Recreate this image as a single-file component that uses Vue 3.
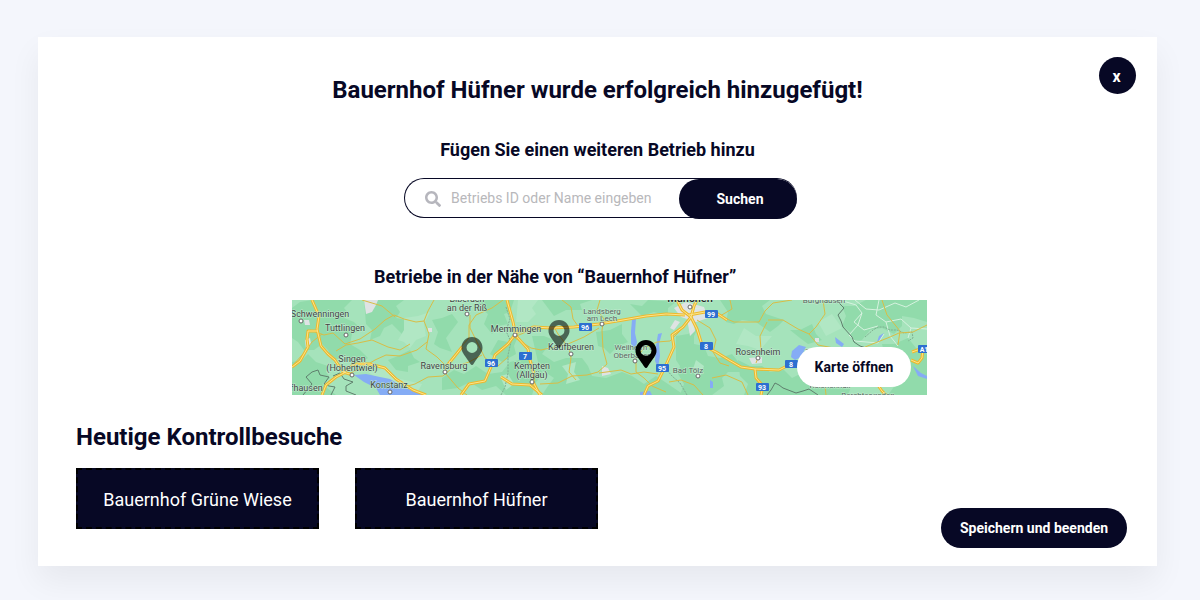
<script setup>
import { ref } from 'vue'

const query = ref('')
const visits = ['Bauernhof Grüne Wiese', 'Bauernhof Hüfner']

const pins = [
  { x: 180, y: 37, muted: true },
  { x: 267, y: 20, muted: true },
  { x: 354, y: 40, muted: false },
]

const patches = [
  'M0 8 8 2 20 0 60 0 52 8 57 14 52 18 62 22 70 30 60 34 58 44 68 50 76 58 64 66 52 58 40 60 36 50 30 44 22 50 12 50 6 42 0 38Z',
  'M72 0 112 0 104 6 108 12 104 18 116 20 124 26 110 34 100 24 92 28 88 36 78 40 80 30 74 24Z',
  'M0 62 10 60 16 54 24 62 36 66 34 72 38 78 30 84 44 95 0 95Z',
  'M96 60 106 56 118 50 122 58 128 62 116 66 116 72 104 70Z',
  'M140 20 150 18 160 14 166 22 160 30 154 38 160 52 148 48 142 44 146 32Z',
  'M186 0 222 0 218 12 212 14 216 24 206 26 200 34 192 24 196 14 188 8Z',
  'M150 78 162 70 172 74 184 66 196 74 210 72 218 62 236 58 246 66 252 74 244 82 240 95 214 95 204 86 190 90 178 82 166 88 150 90Z',
  'M206 40 216 42 226 36 222 46 224 54 210 62 204 58 198 54Z',
  'M250 0 300 0 288 4 290 10 274 10 262 16Z',
  'M240 36 252 36 262 40 256 46 250 54 262 62 274 58 290 58 296 66 300 76 314 78 330 72 340 76 352 84 364 76 376 84 392 95 250 95 256 86 262 78 250 70 246 62Z',
  'M304 32 318 30 330 24 330 34 336 42 326 46 318 54 312 48 306 46Z',
  'M338 4 350 6 356 0 384 2 376 8 376 16 362 12 350 16Z',
  'M384 36 396 34 406 28 402 36 402 44 412 46 416 56 428 58 440 54 448 64 448 72 436 72 430 78 432 86 420 95 388 95 392 84 386 74 388 66 384 60Z',
  'M428 0 478 0 470 6 474 14 492 20 486 26 478 32 464 22 450 20 442 24 434 22 436 12Z',
  'M446 60 458 66 470 66 478 72 492 70 500 78 524 66 540 76 560 84 556 95 452 95 456 84 448 76Z',
  'M498 30 508 30 520 24 524 34 530 40 516 44 508 38Z',
  'M550 6 562 6 574 0 635 0 635 22 622 18 610 16 610 26 602 34 590 28 578 30 570 40 562 42 558 32 550 26 554 16Z',
  'M590 44 602 44 616 38 624 48 635 54 635 95 596 95 604 84 598 76Z',
]
const paleAreas = [
  'M112 18 126 16 138 12 132 24 134 36 124 40 118 48 112 42 106 40 112 30Z',
  'M76 72 84 72 94 66 104 78 130 84 124 95 96 88 88 80Z',
  'M226 0 246 0 240 8 244 14 236 22 224 22Z',
  'M270 66 284 62 282 72 288 80 274 84 276 74Z',
  'M452 28 464 36 480 36 468 50 456 46 444 44Z',
  'M540 14 550 28 534 36 526 22Z',
  'M208 76 216 74 222 84 214 90Z',
  'M404 60 412 66 408 78 400 72Z',
]
const lakes = [
  'M62 75 74 74 88 77 98 79 111 87 132 95 88 95 84 88 72 82Z',
  'M340 20 344 18 343 33 345 42 343 51 339 44 339 31Z',
  'M366 34 370 33 367 44 368 56 366 67 363 61 364 46Z',
  'M500 51 507 45 514 47 509 57 503 60 499 57Z',
  'M543 37 552 44 550 47 544 43Z',
  'M587 36 592 33 588 40 585 42Z',
  'M418 80 421 82 421 88 418 88Z',
  'M348 92 358 91 360 95 348 95Z',
  'M621 66 629 73 635 76 635 79 626 76Z',
]
const urban = [
  'M72 0 86 0 84 5 80 12 74 14Z',
  'M382 8 394 2 412 7 416 18 404 22 389 17Z',
  'M395 18 401 17 403 31 398 36Z',
  'M383 20 388 22 382 30 378 28Z',
  'M13 40 18 38 19 44 14 48Z',
  'M12 20 17 20 18 25 13 25Z',
  'M310 66 316 68 319 74 310 76Z',
  'M457 58 470 57 470 63 460 64Z',
  'M91 95 103 88 107 95Z',
  'M136 28 140 28 140 32 136 32Z',
  'M523 38 527 38 527 42 523 42Z',
]
const minorRoads = [
  'M18 30 32 35 41 33 53 44 68 39 83 29 93 20 102 15 112 19 124 22 132 21 136 11 142 0',
  'M132 21 137 34 134 49 145 57 153 65',
  'M30 34 20 42 12 53 0 66',
  'M44 51 54 45 66 43 80 40 96 47 108 50 118 44',
  'M56 74 70 68 83 60 94 55 108 56 125 50 135 42',
  'M154 65 162 57 168 48 177 38 177 25 184 15 200 8 211 0',
  'M178 15 178 28 186 44 193 58 206 66 216 57',
  'M112 87 123 84 136 77 151 76 160 68 177 62 190 55',
  'M70 0 90 6 103 17',
  'M153 65 154 74 166 88 175 95',
  'M222 37 234 32 248 29 262 27 266 34 277 48 279 58 277 72 284 80',
  'M223 38 239 48 249 50 262 47 276 44 292 37 307 28',
  'M270 0 279 7 281 19 286 26',
  'M308 0 305 10 312 19 310 30 311 49 315 64 306 72 295 75 280 76 266 83 248 84',
  'M344 60 344 72 352 78 360 86 374 92',
  'M307 73 329 70 339 74 352 72 366 74',
  'M343 60 352 48 365 42 378 41 390 29',
  'M405 20 418 28 424 40 421 52 428 63 437 66',
  'M377 82 389 80 402 85 411 95',
  'M438 0 440 9 428 16 442 22 467 22 473 11 481 3 500 0',
  'M475 22 468 36 469 50 464 63',
  'M476 20 491 20 506 29 517 34 524 27 533 14 531 0',
  'M517 34 526 45 542 48 561 52 578 45 598 37 607 33 621 32 635 25',
  'M590 0 595 15 608 31 606 45',
  'M456 95 450 82 434 75 420 78',
  'M520 64 532 76 534 95',
]
const majorRoads = [
  'M20 0 27 16 25 29 29 46 36 54 43 60 51 72 61 75',
  'M25 31 16 31 15 39 16 47 8 61 0 67',
  'M51 72 63 64 78 64 93 68 104 79 121 90 134 95',
  'M30 95 34 85 44 77 54 72',
  'M153 68 162 57 170 47',
  'M169 95 177 84 193 81 199 67 203 55 216 44 225 32',
  'M225 32 242 27 259 28 282 27 307 24 331 20 354 16 374 14 393 15',
  'M215 0 221 22 224 36 236 49 238 60 242 74 241 82 248 95',
  'M209 77 220 84 238 85 250 95',
  'M399 17 391 27 380 35 382 47 373 67 366 81 356 86 352 95',
  'M399 17 402 6 405 0',
  'M399 17 405 29 410 45 424 52 437 60 449 67 463 69 487 70 501 63',
  'M397 15 413 12 426 14 435 20',
  'M385 0 390 10 399 17',
  'M463 69 464 78 471 86 469 95',
  'M583 81 590 91 594 95',
  'M620 52 631 48 630 58 626 63 619 60',
]
const borders = [
  'M11 95 20 84 14 77 20 72 26 70 28 75 37 77 32 84 37 86 43 87 39 95',
  'M41 76 48 73 52 79 61 82 54 86 54 91 64 95',
  'M545 0 548 4 552 8 546 15 549 21 551 27 560 37 562 42 568 46 574 48',
  'M475 95 479 90 483 83 487 85 491 88 504 93 511 91 517 89 526 95',
]
const districtLines = [
  'M214 7 218 19 214 31 219 42 216 55 216 73 213 87 209 95',
  'M395 95 388 83 380 76 375 70',
  'M573 37 581 30 586 27 592 27 598 30 605 30 612 33 620 32 621 38 616 41',
]
const whiteRoads = [
  'M548 0 564 5 570 13 566 25 557 35 563 41 586 43 592 34',
  'M563 0 574 9 587 10 603 3 614 7 627 0',
  'M570 13 562 22 572 30 586 26',
  'M587 0 584 15 594 22 609 19 619 28 635 29',
  'M594 22 598 36 606 46 M619 28 616 38',
  'M396 4 401 12 411 16 M390 15 399 9 411 8 M397 18 401 31',
]
const towns = [
  [9, 21], [54, 35], [60, 75], [98, 92], [153, 72], [175, 14],
  [223, 35], [279, 54], [310, 24], [343, 61], [240, 82], [398, 7],
  [406, 76], [466, 58],
]
const labels = [
  { t: 'Schwenningen', x: 28, y: 17 },
  { t: 'Tuttlingen', x: 53, y: 31 },
  { t: 'Singen', x: 60, y: 62 },
  { t: '(Hohentwiel)', x: 60, y: 71 },
  { t: 'Schaffhausen', x: 3, y: 91 },
  { t: 'Konstanz', x: 97, y: 88 },
  { t: 'Ravensburg', x: 152, y: 69 },
  { t: 'Biberach', x: 175, y: 2 },
  { t: 'an der Riß', x: 175, y: 11 },
  { t: 'Memmingen', x: 224, y: 32 },
  { t: 'Kempten', x: 240, y: 69 },
  { t: '(Allgäu)', x: 240, y: 78 },
  { t: 'Kaufbeuren', x: 279, y: 50 },
  { t: 'Landsberg', x: 310, y: 14, small: true },
  { t: 'am Lech', x: 310, y: 21, small: true },
  { t: 'Weilheim in', x: 343, y: 50, small: true },
  { t: 'Oberbayern', x: 342, y: 58, small: true },
  { t: 'Bad Tölz', x: 396, y: 73, small: true },
  { t: 'München', x: 398, y: 2, city: true },
  { t: 'Burghausen', x: 532, y: 3, small: true },
  { t: 'Rosenheim', x: 466, y: 55 },
  { t: 'Traunstein', x: 532, y: 54, small: true },
  { t: 'Reichenhall', x: 538, y: 88, small: true },
  { t: 'Berchtesgaden', x: 576, y: 98, small: true },
]
const shields = [
  { t: '96', x: 199, y: 63 },
  { t: '96', x: 293, y: 27 },
  { t: '7', x: 233, y: 56 },
  { t: '95', x: 370, y: 68 },
  { t: '99', x: 419, y: 14 },
  { t: '8', x: 414, y: 46 },
  { t: '8', x: 499, y: 64 },
  { t: '93', x: 470, y: 87 },
  { t: 'A1', x: 632, y: 49 },
]
</script>

<template>
  <main class="page">
    <section class="card">
      <button class="close" type="button" aria-label="Schließen">x</button>

      <h1 class="title">Bauernhof Hüfner wurde erfolgreich hinzugefügt!</h1>

      <form class="search" @submit.prevent>
        <label class="subtitle" for="betrieb">Fügen Sie einen weiteren Betrieb hinzu</label>
        <div class="search-bar">
          <svg class="search-icon" viewBox="0 0 512 512" aria-hidden="true">
            <path d="M505 442.700 405.300 343c-4.500-4.500-10.600-7-17-7H372c27.600-35.300 44-79.700 44-128C416 93.100 322.900 0 208 0S0 93.100 0 208s93.100 208 208 208c48.300 0 92.700-16.400 128-44v16.300c0 6.400 2.500 12.500 7 17l99.700 99.700c9.400 9.400 24.600 9.400 33.900 0l28.300-28.300c9.400-9.400 9.400-24.600.1-34zM208 336c-70.700 0-128-57.200-128-128 0-70.700 57.200-128 128-128 70.700 0 128 57.200 128 128 0 70.700-57.200 128-128 128z" />
          </svg>
          <input id="betrieb" v-model="query" class="search-input" type="text" placeholder="Betriebs ID oder Name eingeben" />
          <button class="pill search-button" type="submit">Suchen</button>
        </div>
      </form>

      <section class="nearby">
        <h2 class="subtitle nearby-title">Betriebe in der Nähe von “Bauernhof Hüfner”</h2>
        <div class="map">
          <svg class="map-canvas" viewBox="0 0 635 95" preserveAspectRatio="xMidYMid slice" role="img" aria-label="Karte">
            <rect class="land" width="635" height="95" />
            <path v-for="d in patches" :key="d" class="forest" :d="d" />
            <path v-for="d in paleAreas" :key="d" class="meadow" :d="d" />
            <path v-for="d in urban" :key="d" class="urban" :d="d" />
            <path v-for="d in lakes" :key="d" class="lake" :d="d" />
            <path v-for="d in whiteRoads" :key="d" class="road-white" :d="d" />
            <path v-for="d in districtLines" :key="d" class="district" :d="d" />
            <path v-for="d in borders" :key="d" class="border" :d="d" />
            <path v-for="d in minorRoads" :key="d" class="road-minor" :d="d" />
            <path v-for="d in majorRoads" :key="d" class="road-casing" :d="d" />
            <path v-for="d in majorRoads" :key="d" class="road-major" :d="d" />
            <circle v-for="([x, y], i) in towns" :key="i" class="town" :cx="x" :cy="y" r="2" />
            <text
              v-for="l in labels"
              :key="l.t"
              class="label"
              :class="{ small: l.small, city: l.city }"
              :x="l.x"
              :y="l.y"
            >{{ l.t }}</text>
            <g v-for="(s, i) in shields" :key="i">
              <rect class="shield" :x="s.x - 6" :y="s.y - 4" width="13" height="8" rx="1" />
              <text class="shield-text" :x="s.x" :y="s.y + 3">{{ s.t }}</text>
            </g>
            <svg
              v-for="p in pins"
              :key="p.x"
              class="pin"
              :class="{ muted: p.muted }"
              :x="p.x - 11"
              :y="p.y"
              width="22"
              height="28"
              viewBox="0 0 384 512"
            >
              <path fill-rule="evenodd" d="M172 502C27 291 0 269 0 192 0 86 86 0 192 0s192 86 192 192c0 77-27 99-172 310-10 14-30 14-40 0zM192 292a100 100 0 1 0 0-200 100 100 0 0 0 0 200z" />
            </svg>
          </svg>
          <button class="pill map-button" type="button">Karte öffnen</button>
        </div>
      </section>

      <section class="visits">
        <h2 class="visits-title">Heutige Kontrollbesuche</h2>
        <div class="visit-list">
          <button v-for="v in visits" :key="v" class="visit" type="button">{{ v }}</button>
        </div>
      </section>

      <footer class="actions">
        <button class="pill save" type="button">Speichern und beenden</button>
      </footer>
    </section>
  </main>
</template>

<style>
body {
  margin: 0;
  background: #f4f6fc;
}
</style>

<style scoped>
.page {
  padding: 37px 43px 34px 38px;
  color: #070825;
  font-family: Roboto, "Liberation Sans", sans-serif;
}
.card {
  position: relative;
  padding: 37px 30px 18px 38px;
  background: #fff;
  box-shadow: 0 15px 30px rgba(0, 0, 0, 0.06);
}
button,
input {
  font-family: inherit;
  border: 0;
  padding: 0;
}
button {
  cursor: pointer;
}
.close {
  position: absolute;
  top: 20px;
  right: 21px;
  width: 37px;
  height: 37px;
  padding: 2px 2px 0 0;
  border-radius: 50%;
  background: #070825;
  color: #fff;
  font-size: 16px;
  font-weight: 700;
}
h1,
h2 {
  margin: 0;
}
.title {
  padding-right: 8px;
  font-size: 24px;
  line-height: 32px;
  font-weight: 700;
  text-align: center;
}
.subtitle {
  font-size: 18px;
  line-height: 24px;
  font-weight: 700;
}
.search {
  display: flex;
  flex-direction: column;
  align-items: center;
  gap: 16px;
  margin-top: 32px;
  padding-right: 8px;
}
.search-bar {
  box-sizing: border-box;
  display: flex;
  align-items: flex-start;
  width: 393px;
  max-width: 100%;
  height: 40px;
  margin-left: 6px;
  padding-left: 20px;
  border: 1px solid #070825;
  border-right: 0;
  border-radius: 20px;
}
.search-icon {
  flex: none;
  width: 16px;
  height: 16px;
  margin-top: 12px;
  fill: #b6b6bd;
}
.search-input {
  flex: 1;
  min-width: 0;
  height: 38px;
  margin-left: 10px;
  background: none;
  outline: 0;
  color: #070825;
  font-size: 14px;
}
.search-input::placeholder {
  color: #b8b8bb;
  opacity: 1;
}
.pill {
  height: 40px;
  border-radius: 20px;
  background: #070825;
  color: #fff;
  font-size: 14px;
  font-weight: 700;
}
.search-button {
  flex: none;
  width: 118px;
  padding-left: 4px;
}
.nearby {
  width: 635px;
  max-width: 100%;
  margin: 47px auto 0;
  padding-left: 16px;
}
.nearby-title {
  padding-left: 82px;
}
.map {
  position: relative;
  height: 95px;
  margin-top: 11px;
  overflow: hidden;
}
.map-canvas {
  display: block;
  width: 100%;
  height: 100%;
}
.map-button {
  position: absolute;
  right: 16px;
  bottom: 8px;
  width: 114px;
  background: #fff;
  color: #070825;
}
.land {
  fill: #a5e3bb;
}
.forest {
  fill: #91dbab;
}
.meadow {
  fill: #b1e7c4;
}
.urban {
  fill: #dfe3e4;
}
.lake {
  fill: #85acf5;
}
.road-white,
.road-minor,
.road-major,
.road-casing,
.border,
.district {
  fill: none;
  stroke-linejoin: round;
}
.road-white {
  stroke: #d6f2df;
  stroke-width: 1;
}
.road-minor {
  stroke: #d8bd45;
  stroke-width: 1;
}
.road-casing {
  stroke: #ecb92f;
  stroke-width: 3;
}
.road-major {
  stroke: #fde58a;
  stroke-width: 1;
}
.border {
  stroke: #5f7f6d;
  stroke-width: 1;
}
.district {
  stroke: #7fae90;
  stroke-width: 1;
  stroke-dasharray: 2 1;
}
.town {
  fill: #fff;
  stroke: #666;
  stroke-width: 1;
}
.label {
  fill: #3f4644;
  stroke: #c4ebd1;
  stroke-width: 1;
  paint-order: stroke;
  font-size: 9px;
  text-anchor: middle;
}
.label.small {
  fill: #56655d;
  font-size: 8px;
}
.label.city {
  fill: #222;
  font-size: 11px;
  font-weight: 500;
}
.shield {
  fill: #2d6fd0;
}
.shield-text {
  fill: #fff;
  font-size: 7px;
  font-weight: 700;
  text-anchor: middle;
}
.pin {
  fill: #000;
}
.pin.muted {
  opacity: 0.55;
}
.visits {
  margin-top: 26px;
}
.visits-title {
  font-size: 24px;
  line-height: 32px;
  font-weight: 700;
}
.visit-list {
  display: flex;
  flex-wrap: wrap;
  gap: 36px;
  margin-top: 15px;
}
.visit {
  box-sizing: border-box;
  width: 243px;
  height: 61px;
  padding-top: 2px;
  border: 2px dashed #000;
  background: #070825;
  color: #fff;
  font-size: 18px;
}
.actions {
  display: flex;
  justify-content: flex-end;
  margin-top: -21px;
}
.save {
  width: 186px;
}
</style>
